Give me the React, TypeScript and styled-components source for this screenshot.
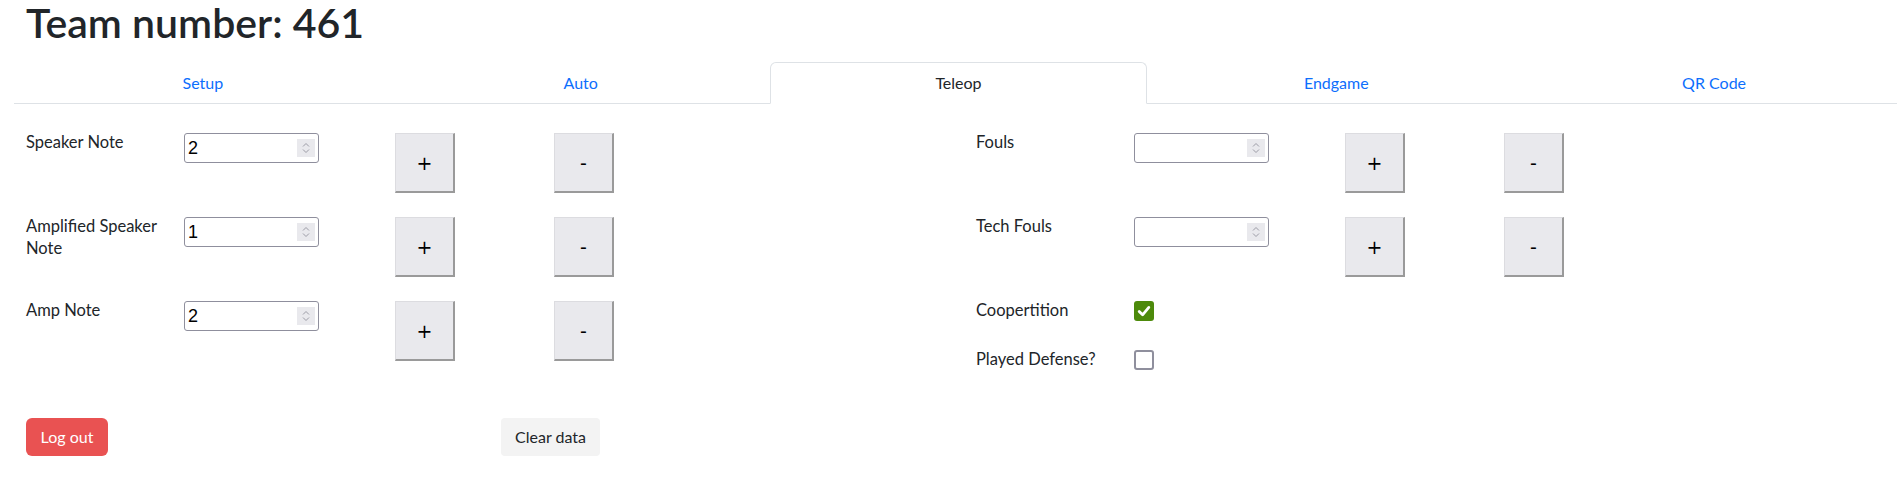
import React from "react";
import styled, { createGlobalStyle, css } from "styled-components";

type Counter = { label: string; value: string };
type Check = { label: string; checked: boolean };

const tabs = ["Setup", "Auto", "Teleop", "Endgame", "QR Code"];

const scoring: Counter[] = [
  { label: "Speaker Note", value: "2" },
  { label: "Amplified Speaker Note", value: "1" },
  { label: "Amp Note", value: "2" },
];

const penalties: Counter[] = [
  { label: "Fouls", value: "" },
  { label: "Tech Fouls", value: "" },
];

const checks: Check[] = [
  { label: "Coopertition", checked: true },
  { label: "Played Defense?", checked: false },
];

const SpinArrows = () => (
  <svg width="18" height="18" viewBox="0 0 18 18">
    <path d="M6 7.5 L9 4.5 L12 7.5" fill="none" stroke="#9c9ca6" strokeWidth="1" />
    <path d="M6 10.5 L9 13.5 L12 10.5" fill="none" stroke="#9c9ca6" strokeWidth="1" />
  </svg>
);

const CheckMark = () => (
  <svg width="20" height="20" viewBox="0 0 20 20">
    <path
      d="M5.2 10.4 L8.6 13.8 L14.8 6.4"
      fill="none"
      stroke="#fff"
      strokeWidth="2.8"
      strokeLinecap="round"
      strokeLinejoin="round"
    />
  </svg>
);

const CounterField = ({ counter }: { counter: Counter }) => (
  <CounterRow>
    <FieldLabel>{counter.label}</FieldLabel>
    <NumberField>
      <NumberValue>{counter.value}</NumberValue>
      <SpinBox>
        <SpinArrows />
      </SpinBox>
    </NumberField>
    <StepButton>+</StepButton>
    <StepButton>-</StepButton>
  </CounterRow>
);

const CheckField = ({ check }: { check: Check }) => (
  <CheckRow>
    <FieldLabel>{check.label}</FieldLabel>
    <CheckBox checked={check.checked}>{check.checked && <CheckMark />}</CheckBox>
  </CheckRow>
);

export default function App() {
  return (
    <>
      <GlobalStyle />
      <Page>
        <Title>Team number: 461</Title>
        <TabBar>
          {tabs.map((tab) => (
            <Tab key={tab} active={tab === "Teleop"}>
              {tab}
            </Tab>
          ))}
        </TabBar>
        <Columns>
          <Column>
            {scoring.map((c) => (
              <CounterField key={c.label} counter={c} />
            ))}
          </Column>
          <Column>
            {penalties.map((c) => (
              <CounterField key={c.label} counter={c} />
            ))}
            {checks.map((c) => (
              <CheckField key={c.label} check={c} />
            ))}
          </Column>
        </Columns>
        <Footer>
          <LogOutButton>Log out</LogOutButton>
          <ClearButton>Clear data</ClearButton>
        </Footer>
      </Page>
    </>
  );
}

const GlobalStyle = createGlobalStyle`
  body {
    margin: 0;
    background: #fff;
    color: #212529;
    font-family: Lato, "Noto Sans", sans-serif;
    overflow: hidden;
  }
`;

const Page = styled.div`
  width: 1903px;
  padding-left: 14px;
  box-sizing: border-box;
`;

const Title = styled.h1`
  margin: 0;
  height: 62px;
  box-sizing: border-box;
  padding: 0 12px;
  font-size: 41px;
  line-height: 46px;
  font-weight: 600;
  color: #212529;
`;

const TabBar = styled.nav`
  display: flex;
  border-bottom: 1px solid #dee2e6;
`;

const Tab = styled.div<{ active?: boolean }>`
  flex: 1;
  text-align: center;
  padding: 8px 16px;
  margin-bottom: -1px;
  font-size: 16px;
  line-height: 24px;
  border: 1px solid transparent;
  border-radius: 6px 6px 0 0;
  color: #0d6efd;

  ${(props) =>
    props.active &&
    css`
      color: #212529;
      background: #fff;
      border-color: #dee2e6 #dee2e6 #fff;
    `}
`;

const Columns = styled.div`
  display: grid;
  grid-template-columns: 950px 1fr;
  padding: 29px 0 0 12px;
`;

const Column = styled.div`
  display: flex;
  flex-direction: column;
  gap: 24px;
`;

const CounterRow = styled.div`
  display: grid;
  grid-template-columns: 158px 211px 159px 60px;
  align-items: start;
  height: 60px;
`;

const CheckRow = styled.div`
  display: grid;
  grid-template-columns: 158px 20px;
  align-items: start;
  height: 25px;
`;

const FieldLabel = styled.div`
  width: 140px;
  margin-top: -2px;
  font-size: 16.5px;
  line-height: 22px;
  color: #212529;
`;

const NumberField = styled.div`
  display: flex;
  align-items: center;
  width: 135px;
  height: 30px;
  box-sizing: border-box;
  border: 1px solid #8f8f9d;
  border-radius: 3px;
  padding: 0 3px 0 3px;
  background: #fff;
`;

const NumberValue = styled.span`
  flex: 1;
  font-family: "Liberation Sans", Arial, sans-serif;
  font-size: 18px;
  color: #000;
`;

const SpinBox = styled.span`
  display: flex;
  width: 18px;
  height: 18px;
  background: #e9e9ed;
`;

const StepButton = styled.button`
  width: 60px;
  height: 60px;
  padding: 0;
  background: #e9e9ed;
  border-style: solid;
  border-width: 1px 2px 2px 1px;
  border-color: #dcdce0 #9a9a9a #9a9a9a #dcdce0;
  font-family: "DejaVu Sans", sans-serif;
  font-size: 19px;
  color: #000;
`;

const CheckBox = styled.span<{ checked: boolean }>`
  display: flex;
  width: 20px;
  height: 20px;
  box-sizing: border-box;
  border-radius: 3px;
  border: ${(props) => (props.checked ? "none" : "2px solid #8f8f9d")};
  background: ${(props) => (props.checked ? "#4d8a0b" : "#fff")};
`;

const Footer = styled.div`
  display: flex;
  gap: 393px;
  margin-top: 43px;
  padding-left: 12px;
`;

const BaseButton = styled.button`
  height: 38px;
  border: none;
  border-radius: 6px;
  font-family: Lato, "Noto Sans", sans-serif;
  font-size: 16px;
  line-height: 24px;
  padding: 0;
`;

const LogOutButton = styled(BaseButton)`
  width: 82px;
  background: #e95252;
  color: #fff;
`;

const ClearButton = styled(BaseButton)`
  width: 99px;
  background: #f3f3f3;
  color: #212529;
  border-radius: 4px;
`;
